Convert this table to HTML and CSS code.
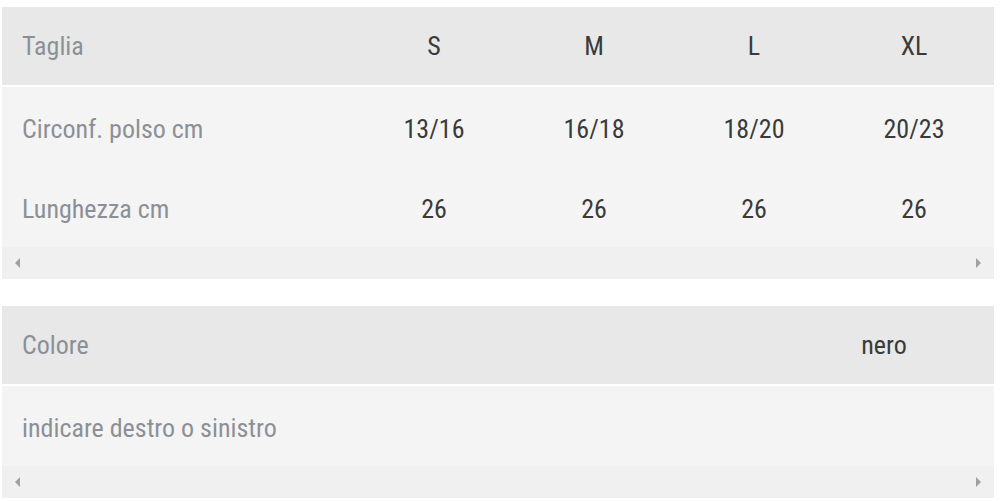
FILE: index.html
```html
<!DOCTYPE html>
<html>
<head>
  <meta charset="UTF-8">
  <title>Tabella taglie</title>
  <link rel="stylesheet" href="styles.css">
</head>
<body>
  <div class="spec">
    <div class="spec-table sizes">
      <div class="row head">
        <div class="cell label">Taglia</div>
        <div class="cell">S</div>
        <div class="cell">M</div>
        <div class="cell">L</div>
        <div class="cell">XL</div>
      </div>
      <div class="body">
        <div class="row">
          <div class="cell label">Circonf. polso cm</div>
          <div class="cell">13/16</div>
          <div class="cell">16/18</div>
          <div class="cell">18/20</div>
          <div class="cell">20/23</div>
        </div>
        <div class="row">
          <div class="cell label">Lunghezza cm</div>
          <div class="cell">26</div>
          <div class="cell">26</div>
          <div class="cell">26</div>
          <div class="cell">26</div>
        </div>
      </div>
      <div class="scrollbar">
        <span class="arrow left"></span>
        <span class="arrow right"></span>
      </div>
    </div>

    <div class="spec-table colors">
      <div class="row head">
        <div class="cell label">Colore</div>
        <div class="cell">nero</div>
      </div>
      <div class="body">
        <div class="row">
          <div class="cell label">indicare destro o sinistro</div>
          <div class="cell"></div>
        </div>
      </div>
      <div class="scrollbar">
        <span class="arrow left"></span>
        <span class="arrow right"></span>
      </div>
    </div>
  </div>
</body>
</html>
```

FILE: styles.css
```css
body {
  margin: 0;
  font-family: 'Roboto', 'Liberation Sans', sans-serif;
  background-color: #FFFFFF;
}

.spec {
  padding: 7px 6px 0 2px;
  display: flex;
  flex-direction: column;
  gap: 27px;
}

.spec-table {
  display: flex;
  flex-direction: column;
}

.row {
  display: grid;
  align-items: center;
}

.sizes .row {
  grid-template-columns: 352px repeat(4, 1fr);
}

.colors .row {
  grid-template-columns: 772px 1fr;
}

.head {
  height: 78px;
  background-color: #E8E8E8;
  margin-bottom: 2px;
}

.body {
  background-color: #F4F4F4;
}

.body .row {
  height: 80px;
  padding-top: 3px;
  box-sizing: border-box;
}

.cell {
  font-size: 26px;
  font-stretch: 75%;
  color: #3A3A3A;
  text-align: center;
}

.cell.label {
  text-align: left;
  padding-left: 20px;
  color: #8C9096;
}

.scrollbar {
  height: 32px;
  background-color: #F0F0F0;
  display: flex;
  justify-content: space-between;
  align-items: center;
  padding: 0 13px;
}

.arrow {
  width: 0;
  height: 0;
  border-top: 5px solid transparent;
  border-bottom: 5px solid transparent;
}

.arrow.left {
  border-right: 5px solid #A0A0A0;
}

.arrow.right {
  border-left: 5px solid #A0A0A0;
}
```
